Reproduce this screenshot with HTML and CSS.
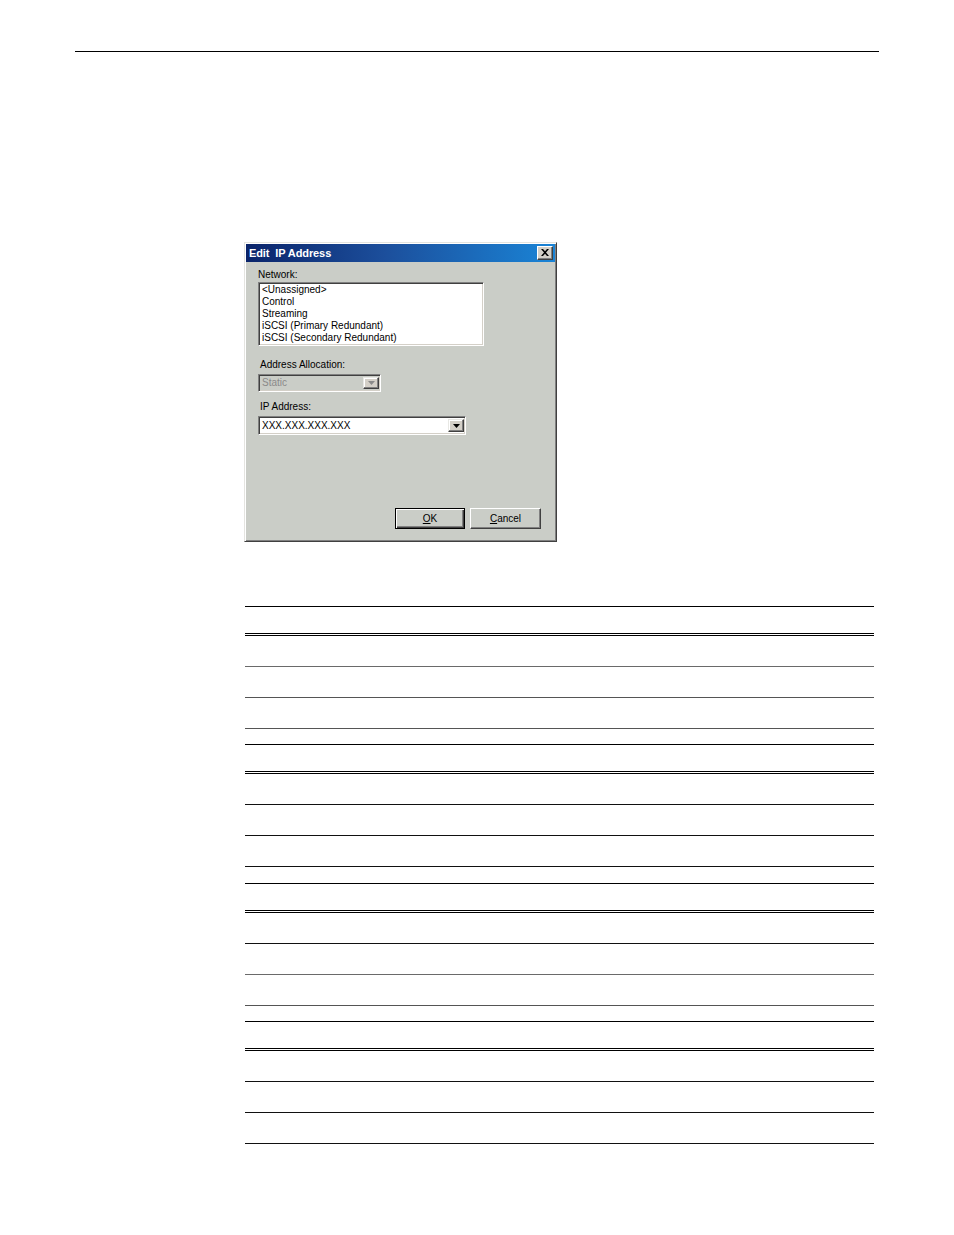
FILE: index.html
```html
<!DOCTYPE html>
<html>
<head>
<meta charset="utf-8">
<link rel="stylesheet" href="styles.css">
</head>
<body>
<div class="page">
  <div class="toprule"></div>

  <div class="dialog">
    <div class="titlebar">
      <span class="title">Edit&nbsp; IP Address</span>
      <span class="closebtn">
        <svg width="8" height="7" viewBox="0 0 8 7"><path d="M0 0h2l2 2.3L6 0h2L5 3.5 8 7H6L4 4.7 2 7H0l3-3.5z" fill="#000"/></svg>
      </span>
    </div>
    <div class="dlg-body">
      <div class="lbl lbl-net">Network:</div>
      <div class="listbox">
        <div class="item">&lt;Unassigned&gt;</div>
        <div class="item">Control</div>
        <div class="item">Streaming</div>
        <div class="item">iSCSI (Primary Redundant)</div>
        <div class="item">iSCSI (Secondary Redundant)</div>
      </div>

      <div class="lbl lbl-alloc">Address Allocation:</div>
      <div class="combo combo-disabled">
        <span class="combo-text">Static</span>
        <span class="dropbtn">
          <svg width="7" height="4" viewBox="0 0 7 4"><path d="M0 0h7L3.5 4z" fill="#8a8a8a"/></svg>
        </span>
      </div>

      <div class="lbl lbl-ip">IP Address:</div>
      <div class="combo combo-ip">
        <span class="combo-text">XXX.XXX.XXX.XXX</span>
        <span class="dropbtn">
          <svg width="7" height="4" viewBox="0 0 7 4"><path d="M0 0h7L3.5 4z" fill="#000"/></svg>
        </span>
      </div>

      <div class="buttons">
        <div class="btn btn-default"><span class="btn-inner"><u>O</u>K</span></div>
        <div class="btn"><span class="btn-inner"><u>C</u>ancel</span></div>
      </div>
    </div>
  </div>

  <div class="tables">
    <div class="tbl">
      <div class="thead"></div>
      <div class="row gray"></div>
      <div class="row dgray"></div>
      <div class="row dgray"></div>
    </div>
    <div class="tbl">
      <div class="thead"></div>
      <div class="row"></div>
      <div class="row"></div>
      <div class="row"></div>
    </div>
    <div class="tbl">
      <div class="thead"></div>
      <div class="row"></div>
      <div class="row gray"></div>
      <div class="row dgray"></div>
    </div>
    <div class="tbl">
      <div class="thead"></div>
      <div class="row"></div>
      <div class="row"></div>
      <div class="row"></div>
    </div>
  </div>
</div>
</body>
</html>
```

FILE: styles.css
```css
html, body {
  margin: 0;
  padding: 0;
  background: #fff;
}

.page {
  padding-top: 51px;
  font-family: "Liberation Sans", Arial, sans-serif;
}

.toprule {
  margin-left: 75px;
  width: 804px;
  border-top: 1px solid #000;
}

/* ---------- dialog ---------- */
.dialog {
  box-sizing: border-box;
  margin-top: 190px;
  margin-left: 244px;
  width: 313px;
  height: 300px;
  background: #cacdc7;
  border: 1px solid;
  border-color: #e4e4e0 #404040 #404040 #e4e4e0;
  box-shadow: inset 1px 1px #ffffff, inset -1px -1px #808080;
  padding: 1px;
  display: flex;
  flex-direction: column;
}

.titlebar {
  height: 18px;
  background: linear-gradient(90deg, #0a246a 0%, #1c4f9c 45%, #1a84d6 100%);
  display: flex;
  align-items: center;
  justify-content: space-between;
  padding: 0 2px 0 3px;
}

.title {
  color: #fff;
  font-weight: bold;
  font-size: 11px;
  line-height: 13px;
  letter-spacing: -0.1px;
}

.closebtn {
  box-sizing: border-box;
  width: 16px;
  height: 14px;
  background: #d4d0c8;
  border: 1px solid;
  border-color: #ffffff #404040 #404040 #ffffff;
  box-shadow: inset -1px -1px #808080;
  display: flex;
  align-items: center;
  justify-content: center;
  padding-bottom: 1px;
}

.dlg-body {
  flex: 1;
  display: flex;
  flex-direction: column;
  align-items: flex-start;
  padding: 7px 14px 11px 12px;
  font-size: 10px;
  line-height: 12px;
  color: #000;
}

.lbl {
  height: 12px;
  white-space: nowrap;
}

.lbl-alloc, .lbl-ip {
  margin-left: 2px;
}

.lbl-alloc {
  margin-top: 13px;
}

.lbl-ip {
  margin-top: 9px;
}

.listbox {
  box-sizing: border-box;
  margin-top: 1px;
  width: 226px;
  height: 64px;
  background: #fff;
  border: 1px solid;
  border-color: #808080 #ffffff #ffffff #808080;
  box-shadow: inset 1px 1px #404040, inset -1px -1px #d4d0c8;
  padding: 1px 3px 0 3px;
  overflow: hidden;
}

.item {
  height: 12px;
  white-space: nowrap;
}

.combo {
  box-sizing: border-box;
  margin-top: 3px;
  border: 1px solid;
  border-color: #808080 #ffffff #ffffff #808080;
  box-shadow: inset 1px 1px #404040, inset -1px -1px #d4d0c8;
  display: flex;
  align-items: center;
  justify-content: space-between;
  padding: 2px 2px 2px 3px;
}

.combo-disabled {
  width: 123px;
  height: 18px;
  background: #cacdc7;
  color: #8a8a8a;
}

.combo-ip {
  width: 208px;
  height: 19px;
  background: #fff;
}

.combo-text {
  white-space: nowrap;
}

.dropbtn {
  box-sizing: border-box;
  width: 16px;
  height: 100%;
  background: #d4d0c8;
  border: 1px solid;
  border-color: #e8e8e4 #404040 #404040 #e8e8e4;
  box-shadow: inset -1px -1px #808080, inset 1px 1px #ffffff;
  display: flex;
  align-items: center;
  justify-content: center;
  margin-right: -1px;
}

.buttons {
  margin-top: auto;
  align-self: flex-end;
  display: flex;
  gap: 5px;
}

.btn {
  box-sizing: border-box;
  width: 71px;
  height: 21px;
  background: #cacdc7;
  border: 1px solid;
  border-color: #ffffff #404040 #404040 #ffffff;
  box-shadow: inset -1px -1px #808080;
  display: flex;
  align-items: center;
  justify-content: center;
  font-size: 10px;
}

.btn-default {
  width: 70px;
  border: 1px solid #000;
  box-shadow: inset 1px 1px #ffffff, inset -1px -1px #404040, inset -2px -2px #808080;
}

.btn-inner u {
  text-decoration: underline;
  text-underline-offset: 1px;
}

/* ---------- tables ---------- */
.tables {
  margin-top: 64px;
  margin-left: 245px;
  width: 629px;
}

.tbl {
  border-top: 1px solid #000;
  margin-top: 15px;
}

.tbl:first-child {
  margin-top: 0;
}

.tbl:nth-child(3) {
  margin-top: 16px;
}

.thead {
  height: 26px;
  border-bottom: 3px double #000;
}

.row {
  height: 30px;
  border-bottom: 1px solid #111;
}

.row.gray {
  border-bottom-color: #6a6a6a;
}

.row.dgray {
  border-bottom-color: #555;
}
```
